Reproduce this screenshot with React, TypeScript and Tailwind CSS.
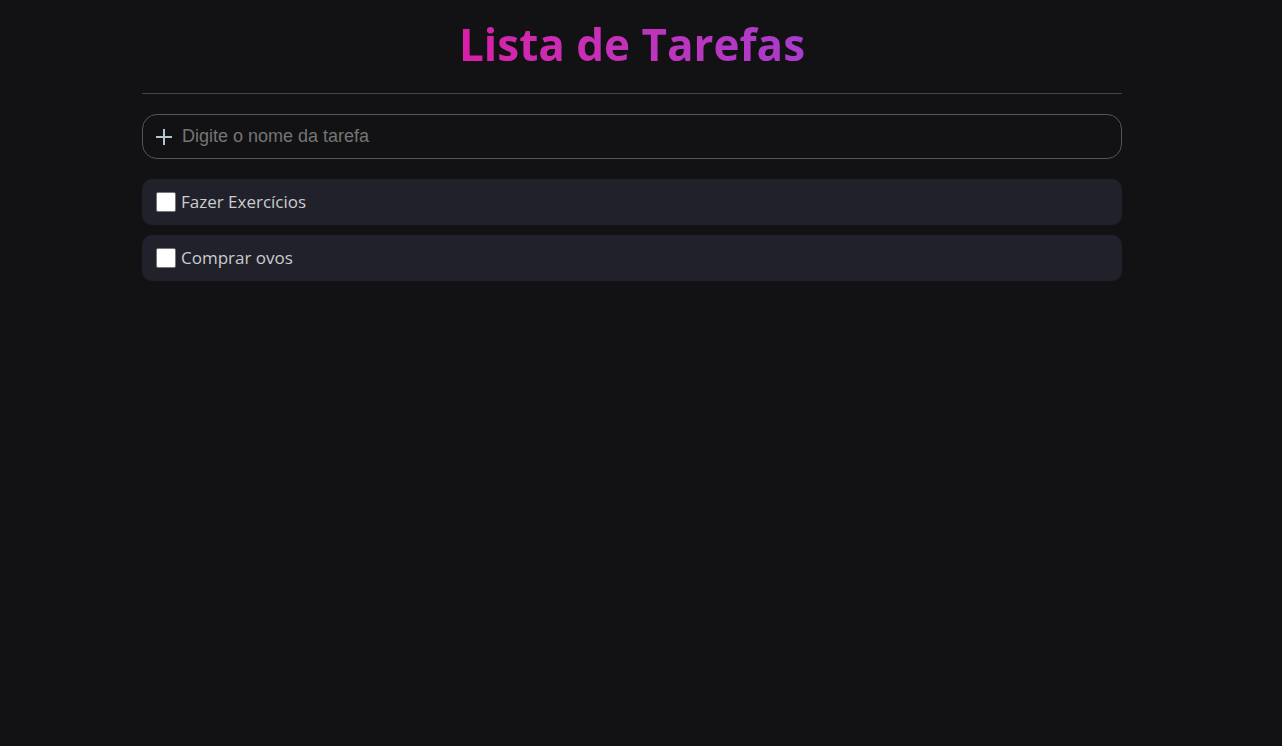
import { useState } from 'react';
import type { FormEvent } from 'react';

type Task = { id: number; name: string; done: boolean };

const initialTasks: Task[] = [
  { id: 1, name: 'Fazer Exercícios', done: false },
  { id: 2, name: 'Comprar ovos', done: false },
];

function AddTask({ onAdd }: { onAdd: (name: string) => void }) {
  const [value, setValue] = useState('');

  function submit(event: FormEvent) {
    event.preventDefault();
    if (!value.trim()) return;
    onAdd(value.trim());
    setValue('');
  }

  return (
    <form
      onSubmit={submit}
      className="my-5 flex items-start gap-[9px] rounded-[15px] border border-[#555555] px-3 pt-[9px] pb-[10px]"
    >
      <button type="submit" aria-label="Adicionar tarefa" className="flex h-6 shrink-0 items-end pb-0.5">
        <svg width="18" height="18" viewBox="0 0 18 18" aria-hidden="true">
          <path d="M1 9H17M9 1V17" stroke="#b3c6cd" strokeWidth="2" />
        </svg>
      </button>
      <input
        type="text"
        aria-label="Nome da tarefa"
        placeholder="Digite o nome da tarefa"
        value={value}
        onChange={(event) => setValue(event.target.value)}
        className="min-w-0 flex-1 bg-transparent font-['Liberation_Sans',sans-serif] text-[18px] leading-6 text-white outline-none placeholder:text-[#757575]"
      />
    </form>
  );
}

function TaskItem({ task, onToggle }: { task: Task; onToggle: () => void }) {
  return (
    <li className="flex items-center rounded-[10px] bg-[#21212c] px-[14px] py-[11px]">
      <label className="flex items-center gap-[5px] text-[17px] leading-6 text-[#cccccc]">
        <input
          type="checkbox"
          checked={task.done}
          onChange={onToggle}
          className="size-5 shrink-0 appearance-none rounded-[2px] border border-[#767676] bg-white checked:bg-[#0075ff]"
        />
        {task.name}
      </label>
    </li>
  );
}

export default function App() {
  const [tasks, setTasks] = useState<Task[]>(initialTasks);

  function addTask(name: string) {
    setTasks((list) => [...list, { id: list.length + 1, name, done: false }]);
  }

  function toggle(id: number) {
    setTasks((list) => list.map((task) => (task.id === id ? { ...task, done: !task.done } : task)));
  }

  return (
    <div className="min-h-screen bg-[#121214] pr-[18px] font-['Open_Sans','Noto_Sans',sans-serif]">
      <main className="mx-auto max-w-[980px] pt-3">
        <header className="flex justify-center border-b border-[#444444] pb-[17px]">
          <h1 className="bg-linear-to-r from-[#da1da8] to-[#a93bcb] bg-clip-text text-[44px] leading-[64px] font-bold text-transparent">
            Lista de Tarefas
          </h1>
        </header>
        <AddTask onAdd={addTask} />
        <ul className="flex flex-col gap-[10px]">
          {tasks.map((task) => (
            <TaskItem key={task.id} task={task} onToggle={() => toggle(task.id)} />
          ))}
        </ul>
      </main>
    </div>
  );
}
